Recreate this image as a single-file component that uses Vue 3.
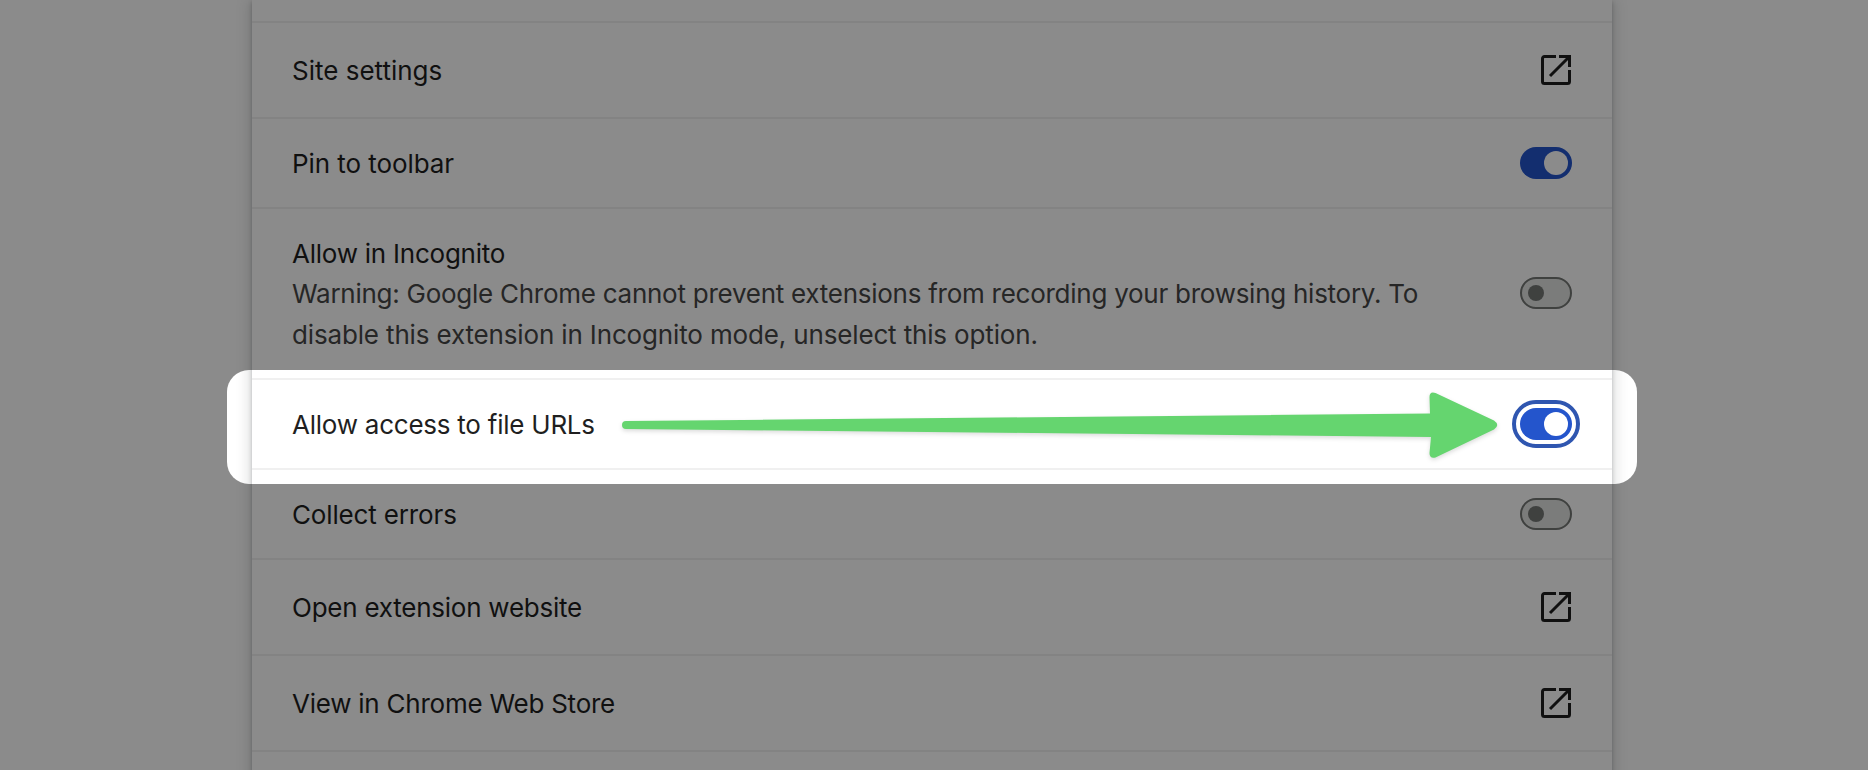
<script setup>
const rows = [
  { label: 'Site settings', kind: 'link', fit: 'f0' },
  { label: 'Pin to toolbar', kind: 'on', fit: 'f1' },
  {
    label: 'Allow in Incognito',
    kind: 'off',
    fit: 'f3',
    notes: [
      { text: 'Warning: Google Chrome cannot prevent extensions from recording your browsing history. To', fit: 'f4' },
      { text: 'disable this extension in Incognito mode, unselect this option.', fit: 'f2' },
    ],
  },
  { label: 'Allow access to file URLs', kind: 'on', focused: true, fit: 'f3' },
  { label: 'Collect errors', kind: 'off', fit: 'f2' },
  { label: 'Open extension website', kind: 'link', fit: 'f3' },
  { label: 'View in Chrome Web Store', kind: 'link', fit: 'f3' },
]
</script>

<template>
  <div class="page">
    <main class="card">
      <div class="lead"></div>
      <div v-for="row in rows" :key="row.label" class="row" :class="{ tall: row.kind === 'link', noted: row.notes }">
        <div class="text">
          <div class="label" :class="row.fit">{{ row.label }}</div>
          <div v-for="note in row.notes || []" :key="note.text" class="note" :class="note.fit">{{ note.text }}</div>
        </div>
        <svg v-if="row.kind === 'link'" class="icon" viewBox="0 0 30 30" width="30" height="30" fill="none" stroke="currentColor" stroke-width="3">
          <path d="M15 1.500H3.500a2 2 0 0 0-2 2v23a2 2 0 0 0 2 2h23a2 2 0 0 0 2-2V15" />
          <path d="M18 1.500h10.500v10.500" />
          <path d="M9 21 28 2" />
        </svg>
        <div v-else class="toggle" :class="[row.kind, { focused: row.focused }]"><span class="knob"></span></div>
      </div>
      <div class="row tail"></div>
    </main>

    <div class="spotlight"></div>
    <svg class="arrow" viewBox="0 0 900 90" width="900" height="90">
      <path
        d="M16 41 820 33.500 819.500 17Q819.500 11 825.500 13L884 40.500Q890.500 45 884 49.500L825.500 77.500Q819.500 79 819.500 73L821 57 16 49A4 4 0 0 1 16 41Z"
        fill="#65d56f"
      />
    </svg>
  </div>
</template>

<style>
body {
  margin: 0;
  background: #fff;
}
</style>

<style scoped>
.page {
  position: relative;
  display: flex;
  justify-content: center;
  box-sizing: border-box;
  width: 1868px;
  height: 770px;
  padding-right: 4px;
  overflow: hidden;
  background: #fff;
  color: #1f1f1f;
  font-family: Inter, "Liberation Sans", sans-serif;
  font-size: 26px;
}
.card {
  width: 1360px;
  height: 860px;
  background: #fff;
  box-shadow: 0 2px 4px rgba(60, 64, 67, 0.3), 0 4px 12px 4px rgba(60, 64, 67, 0.15);
}
.lead {
  height: 21px;
}
.row {
  display: flex;
  align-items: center;
  justify-content: space-between;
  box-sizing: border-box;
  height: 90px;
  padding: 0 40px;
  border-top: 2px solid #f0f0f0;
}
.row.tall {
  height: 96px;
}
.row.noted {
  height: 171px;
}
.label {
  padding-top: 2px;
  line-height: 38px;
  white-space: nowrap;
}
.note {
  line-height: 41px;
  color: #474747;
  white-space: nowrap;
}
.f1 { letter-spacing: -0.07px; }
.f2 { letter-spacing: -0.15px; }
.f3 { letter-spacing: -0.24px; }
.f4 { letter-spacing: -0.26px; }
.icon {
  flex: none;
  margin-right: 1px;
}
.toggle {
  display: flex;
  flex: none;
  align-items: center;
  box-sizing: border-box;
  width: 52px;
  height: 32px;
  border-radius: 16px;
}
.toggle.on {
  justify-content: flex-end;
  padding: 4px;
  background: #2455cc;
}
.toggle.off {
  padding: 0 6px;
  border: 2px solid #747775;
  background: #e1e3e1;
}
.noted .toggle {
  margin-bottom: 1px;
}
.knob {
  border-radius: 50%;
}
.on .knob {
  width: 24px;
  height: 24px;
  background: #fff;
}
.off .knob {
  width: 16px;
  height: 16px;
  background: #747775;
}
.toggle.focused {
  outline: 4px solid #2f56b0;
  outline-offset: 4px;
}
.spotlight {
  position: absolute;
  left: 226.5px;
  top: 370px;
  width: 1410.5px;
  height: 114px;
  border-radius: 22px;
  box-shadow: 0 0 0 2000px rgba(0, 0, 0, 0.455);
}
.arrow {
  position: absolute;
  left: 610px;
  top: 380px;
  filter: drop-shadow(0 2px 2px rgba(0, 0, 0, 0.14));
}
</style>
